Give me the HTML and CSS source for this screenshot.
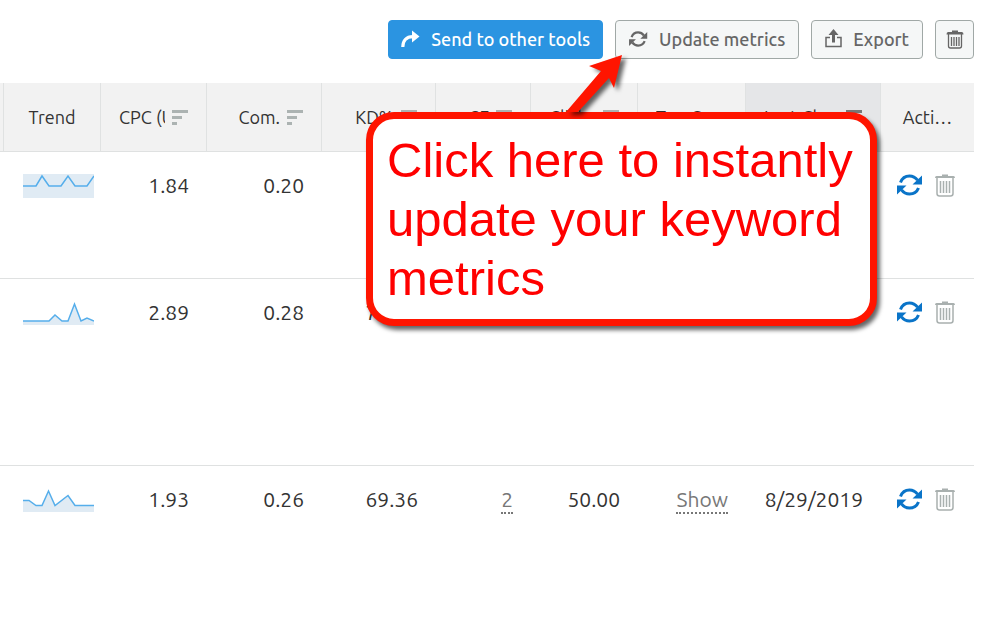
FILE: index.html
```html
<!DOCTYPE html>
<html lang="en">
<head>
    <meta charset="UTF-8">
    <meta name="viewport" content="width=device-width, initial-scale=1.0">
    <title>Keyword metrics</title>
    <link rel="stylesheet" href="styles.css">
</head>
<body>
    <!-- shared icons -->
    <svg class="sprite" aria-hidden="true">
        <symbol id="sort" viewBox="0 0 16 15">
            <path d="M0 0h16v3H0zM0 6h10v3H0zM0 12h5v3H0z" fill="currentColor"/>
        </symbol>
        <symbol id="refresh" viewBox="0 0 26 22">
            <path d="M3.5 8.5C5 4.500 8.500 2 12.500 2c3.500 0 6 1.500 8 4.200M21.500 14c-1.500 3.800-5 6-9 6-3.500 0-6-1.500-8-4.200" fill="none" stroke="currentColor" stroke-width="3"/>
            <path d="M25 1.500v9h-9.500zM0 20.500v-9h9.500z" fill="currentColor"/>
        </symbol>
        <symbol id="bin" viewBox="0 0 20 23">
            <path d="M7 2V.5h6V2h5.500q1.500 0 1.500 2H0q0-2 1.500-2z" fill="currentColor"/>
            <path d="M2 4v15.500q0 2.500 2.500 2.500h11q2.500 0 2.500-2.500V4M5.500 7v12M8.500 7v12M11.500 7v12M14.500 7v12" fill="none" stroke="currentColor" stroke-width="1.500"/>
        </symbol>
    </svg>

    <div class="toolbar">
        <button type="button" class="btn send">
            <svg width="19" height="18" viewBox="0 0 19 18"><path d="M1.800 17C1.800 11 5 6.700 12 6.700" fill="none" stroke="#fff" stroke-width="3.200"/><path d="M11 0.500 18.500 6.500 11 12.500z" fill="#fff"/></svg>
            <span>Send to other tools</span>
        </button>
        <button type="button" class="btn">
            <svg width="19" height="16"><use href="#refresh"/></svg>
            <span>Update metrics</span>
        </button>
        <button type="button" class="btn">
            <svg width="17" height="19" viewBox="0 0 17 19"><path d="M5 8.500H1v9h15v-9H12" fill="none" stroke="currentColor" stroke-width="1.500"/><path d="M8.500 0 13.500 6h-3.500v7.500H7V6H3.500z" fill="currentColor"/></svg>
            <span>Export</span>
        </button>
        <button type="button" class="btn square" aria-label="Delete">
            <svg width="18" height="19" viewBox="0 0 18 19"><path d="M6 2V.5h6V2h4q1.500 0 1.500 2.500H.5Q.5 2 2 2z" fill="currentColor"/><path d="M2.500 4v12q0 2 2 2h9q2 0 2-2V4M5.500 7v9M8 7v9M10.500 7v9M13 7v9" fill="none" stroke="currentColor" stroke-width="1.300"/></svg>
        </button>
    </div>

    <div class="wrap">
        <table class="keywords">
            <colgroup>
                <col class="c-edge"><col class="c-trend"><col class="c-cpc"><col class="c-com"><col class="c-kd">
                <col class="c-sf"><col class="c-click"><col class="c-top"><col class="c-last"><col class="c-act">
            </colgroup>
            <thead>
                <tr>
                    <th></th>
                    <th class="center">Trend</th>
                    <th><div class="head"><span>CPC (USD)</span><svg><use href="#sort"/></svg></div></th>
                    <th><div class="head"><span>Com.</span><svg><use href="#sort"/></svg></div></th>
                    <th><div class="head"><span>KD%</span><svg><use href="#sort"/></svg></div></th>
                    <th><div class="head"><span>SF</span><svg><use href="#sort"/></svg></div></th>
                    <th><div class="head"><span>Click pot.</span><svg><use href="#sort"/></svg></div></th>
                    <th><div class="head start"><span>Top C…</span></div></th>
                    <th class="sorted"><div class="head"><span>Last Che…</span><svg><use href="#sort"/></svg></div></th>
                    <th class="center">Acti…</th>
                </tr>
            </thead>
            <tbody>
                <tr class="short">
                    <td></td>
                    <td class="trend"><svg viewBox="0 0 71 24"><path class="area" d="M0 0h71v24H0z"/><path class="line" d="M0 12h13l6-10 7 10h12l7-10 7 10h12l7-10"/></svg></td>
                    <td>1.84</td>
                    <td>0.20</td>
                    <td></td><td></td><td></td><td></td><td></td>
                    <td class="actions">
                        <button type="button" class="icon update" aria-label="Update"><svg width="26" height="22"><use href="#refresh"/></svg></button>
                        <button type="button" class="icon" aria-label="Delete"><svg width="20" height="23"><use href="#bin"/></svg></button>
                    </td>
                </tr>
                <tr class="tall">
                    <td></td>
                    <td class="trend"><svg viewBox="0 0 71 24"><path class="area" d="M0 20h26l6-6 7 6h6L51.500 3 58 20l6-3 7 3v4H0z"/><path class="line" d="M0 20h26l6-6 7 6h6L51.500 3 58 20l6-3 7 3"/></svg></td>
                    <td>2.89</td>
                    <td>0.28</td>
                    <td>74.15</td><td></td><td></td><td></td><td></td>
                    <td class="actions">
                        <button type="button" class="icon update" aria-label="Update"><svg width="26" height="22"><use href="#refresh"/></svg></button>
                        <button type="button" class="icon" aria-label="Delete"><svg width="20" height="23"><use href="#bin"/></svg></button>
                    </td>
                </tr>
                <tr class="last">
                    <td></td>
                    <td class="trend"><svg viewBox="0 0 71 24"><path class="area" d="M0 12.500h6l7 5h6L25.500 3 32 17.500l13-10 7 10h19V24H0z"/><path class="line" d="M0 12.500h6l7 5h6L25.500 3 32 17.500l13-10 7 10h19"/></svg></td>
                    <td>1.93</td>
                    <td>0.26</td>
                    <td>69.36</td>
                    <td><a href="#">2</a></td>
                    <td>50.00</td>
                    <td><a href="#">Show</a></td>
                    <td>8/29/2019</td>
                    <td class="actions">
                        <button type="button" class="icon update" aria-label="Update"><svg width="26" height="22"><use href="#refresh"/></svg></button>
                        <button type="button" class="icon" aria-label="Delete"><svg width="20" height="23"><use href="#bin"/></svg></button>
                    </td>
                </tr>
            </tbody>
        </table>
    </div>

    <!-- note with the arrow to the update button -->
    <div class="callout">
        <svg class="arrow" width="70" height="70" viewBox="0 0 70 70"><path d="M62 5 54 38 49 28 18 62H6L41 21 29 16z" fill="#ff1500"/></svg>
        <p>Click here to instantly update your keyword metrics</p>
    </div>
</body>
</html>
```
FILE: styles.css
```css
* {margin: 0; padding: 0; box-sizing: border-box;}
body {
    position: relative;
    min-height: 100vh;
    background-color: #fff;
    color: #333;
    font-family: Ubuntu, "Noto Sans", sans-serif;
    font-size: 18px;
}
.sprite {
    position: absolute;
    width: 0;
    height: 0;
}
button {
    font: inherit;
    cursor: pointer;
}

/* toolbar */
.toolbar {
    display: flex;
    justify-content: flex-end;
    gap: 12px;
    padding: 20px 26px 24px;
}
.btn {
    display: flex;
    align-items: center;
    gap: 11px;
    height: 39px;
    padding: 0 13px 2px;
    border: 1px solid #a0a8a6;
    border-radius: 4px;
    background-color: #f5f7f7;
    color: #666;
    font-weight: 500;
}
.send {
    padding: 0 12px 2px;
    border-color: #2b94e1;
    background-color: #2b94e1;
    color: #fff;
}
.square {
    width: 39px;
    padding: 0;
    justify-content: center;
}

/* table */
.wrap {
    padding-right: 26px;
}
.keywords {
    width: 100%;
    table-layout: fixed;
    border-collapse: separate;
    border-spacing: 0;
}
.c-edge {width: 4px;}
.c-trend {width: 97px;}
.c-cpc {width: 106px;}
.c-com {width: 115px;}
.c-kd {width: 114px;}
.c-sf {width: 95px;}
.c-click {width: 107px;}
.c-top {width: 108px;}
.c-last {width: 135px;}
.c-act {width: 93px;}
th {
    height: 69px;
    border-right: 1px solid #e0e2e2;
    border-bottom: 1px solid #dfe1e1;
    background-color: #f2f2f2;
    font-weight: 400;
}
th:last-child {
    border-right: 0;
}
.head {
    display: flex;
    align-items: center;
    justify-content: flex-end;
    gap: 7px;
    padding: 0 18px;
}
.head span {
    overflow: hidden;
    white-space: nowrap;
}
.head svg {
    flex: none;
    width: 16px;
    height: 15px;
    color: #acb3b2;
}
.start {
    justify-content: flex-start;
}
.sorted {
    background-color: #e5e6e8;
}
.sorted .head svg {
    color: #777;
}
.center {
    text-align: center;
}
td {
    padding: 19px 18px 0 0;
    border-bottom: 1px solid #dfe1e1;
    font-size: 21px;
    line-height: 28px;
    text-align: right;
    vertical-align: top;
    white-space: nowrap;
}
.short td {
    height: 127px;
}
.tall td {
    height: 187px;
}
.last td {
    border-bottom: 0;
}
td a {
    display: inline-block;
    border-bottom: 2px dotted #777;
    color: #777;
    line-height: 25px;
    text-decoration: none;
}
.keywords .trend {
    padding: 22px 0 0 19px;
    text-align: left;
}
.trend svg {
    display: block;
    width: 71px;
    height: 24px;
}
.area {
    fill: #e0ebf4;
}
.line {
    fill: none;
    stroke: #55aeeb;
    stroke-width: 1.5;
}
.keywords .actions {
    padding: 22px 0 0 16px;
    text-align: left;
}
.icon {
    border: 0;
    background: none;
    color: #a9b0af;
    line-height: 0;
    vertical-align: top;
}
.update {
    margin-right: 7px;
    color: #0a74c8;
}

/* callout */
.callout {
    position: absolute;
    top: 112px;
    right: 123px;
    width: 511px;
    padding: 12px 10px 11px 14px;
    border: 7px solid #ff1500;
    border-radius: 28px;
    background-color: #fff;
    box-shadow: 3px 4px 4px rgba(0, 0, 0, 0.6);
    color: #f00;
    font-family: Helvetica, "Liberation Sans", sans-serif;
    font-size: 49px;
    line-height: 59px;
}
.arrow {
    position: absolute;
    top: -69px;
    left: 187px;
    filter: drop-shadow(4px 3px 2px rgba(0, 0, 0, 0.6));
}
```
